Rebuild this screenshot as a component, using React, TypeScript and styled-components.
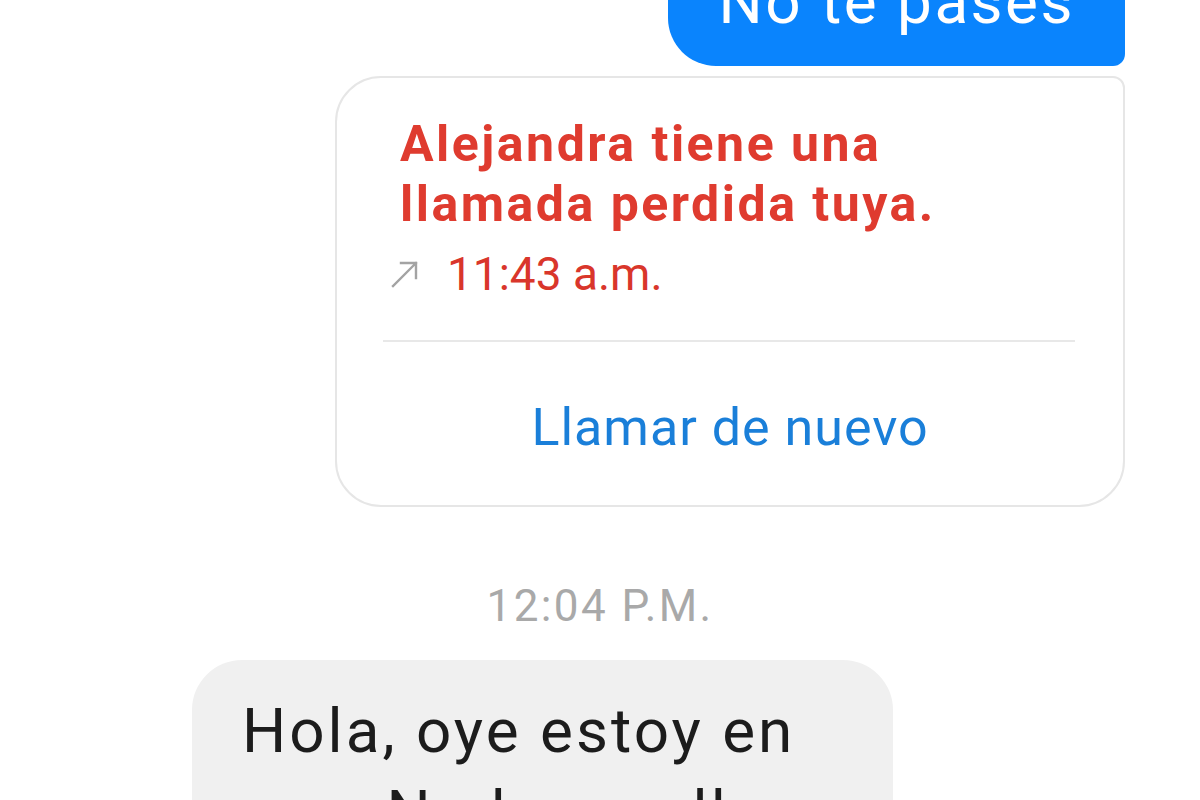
import React from "react";
import styled, { createGlobalStyle } from "styled-components";

const Global = createGlobalStyle`
  html, body { margin: 0; padding: 0; background: #ffffff; }
  body { font-family: Roboto, "Noto Sans", "Liberation Sans", sans-serif; }
  * { box-sizing: border-box; }
`;

const Screen = styled.div`
  width: 1200px;
  height: 800px;
  overflow: hidden;
  background: #ffffff;
  display: flex;
  flex-direction: column;
`;

const Row = styled.div<{ $side: "left" | "right" | "center" }>`
  display: flex;
  justify-content: ${(p) =>
    p.$side === "right" ? "flex-end" : p.$side === "left" ? "flex-start" : "center"};
  padding: ${(p) => (p.$side === "right" ? "0 75px 0 0" : p.$side === "left" ? "0 0 0 192px" : "0")};
`;

const SentBubble = styled.div`
  margin-top: -35px;
  background: #0a84fd;
  color: #ffffff;
  font-size: 62px;
  line-height: 74px;
  letter-spacing: 2.5px;
  padding: 0 50px 27px 51px;
  border-radius: 0 0 12px 48px;
  white-space: nowrap;
`;

const CallCard = styled.div`
  margin-top: 10px;
  width: 790px;
  height: 431px;
  border: 2px solid #e6e6e6;
  border-radius: 46px 12px 46px 46px;
  display: flex;
  flex-direction: column;
`;

const CardBody = styled.div`
  padding: 36px 40px 38px 63px;
`;

const CallTitle = styled.div`
  color: #df3b2f;
  font-weight: 700;
  font-size: 50px;
  line-height: 60px;
  letter-spacing: 2.5px;
`;

const TimeRow = styled.div`
  margin-top: 12px;
  display: flex;
  align-items: center;
  margin-left: -10px;
  gap: 27px;
  height: 56px;
`;

const CallTime = styled.span`
  color: #d9362b;
  font-size: 46px;
  line-height: 56px;
`;

const Divider = styled.div`
  height: 2px;
  background: #e8e8e8;
  margin: 0 48px 0 46px;
`;

const CallBack = styled.div`
  padding-top: 55px;
  text-align: center;
  color: #1a7fd9;
  font-size: 52px;
  line-height: 62px;
  letter-spacing: 1px;
`;

const Stamp = styled.div`
  margin-top: 73px;
  color: #a9a9a9;
  font-size: 44px;
  line-height: 52px;
  text-align: center;
  letter-spacing: 2.4px;
`;

const ReceivedBubble = styled.div`
  margin-top: 28px;
  width: 701px;
  background: #f0f0f0;
  color: #1c1c1c;
  font-size: 62px;
  line-height: 82px;
  letter-spacing: 3px;
  padding: 30px 40px 40px 50px;
  border-radius: 50px;
  white-space: nowrap;
`;

const ArrowIcon = () => (
  <svg width="30" height="30" viewBox="0 0 30 30" fill="none">
    <path
      d="M3 27 L26 4 M11 4 H26 V19"
      stroke="#a3a3a3"
      strokeWidth="2.4"
      strokeLinecap="square"
    />
  </svg>
);

export default function App() {
  return (
    <Screen>
      <Global />
      <Row $side="right">
        <SentBubble>No te pases</SentBubble>
      </Row>
      <Row $side="right">
        <CallCard>
          <CardBody>
            <CallTitle>
              Alejandra tiene una
              <br />
              llamada perdida tuya.
            </CallTitle>
            <TimeRow>
              <ArrowIcon />
              <CallTime>11:43 a.m.</CallTime>
            </TimeRow>
          </CardBody>
          <Divider />
          <CallBack>Llamar de nuevo</CallBack>
        </CallCard>
      </Row>
      <Row $side="center">
        <Stamp>12:04 P.M.</Stamp>
      </Row>
      <Row $side="left">
        <ReceivedBubble>
          Hola, oye estoy en
          <br />
          ese. Nadamas llego
        </ReceivedBubble>
      </Row>
    </Screen>
  );
}
